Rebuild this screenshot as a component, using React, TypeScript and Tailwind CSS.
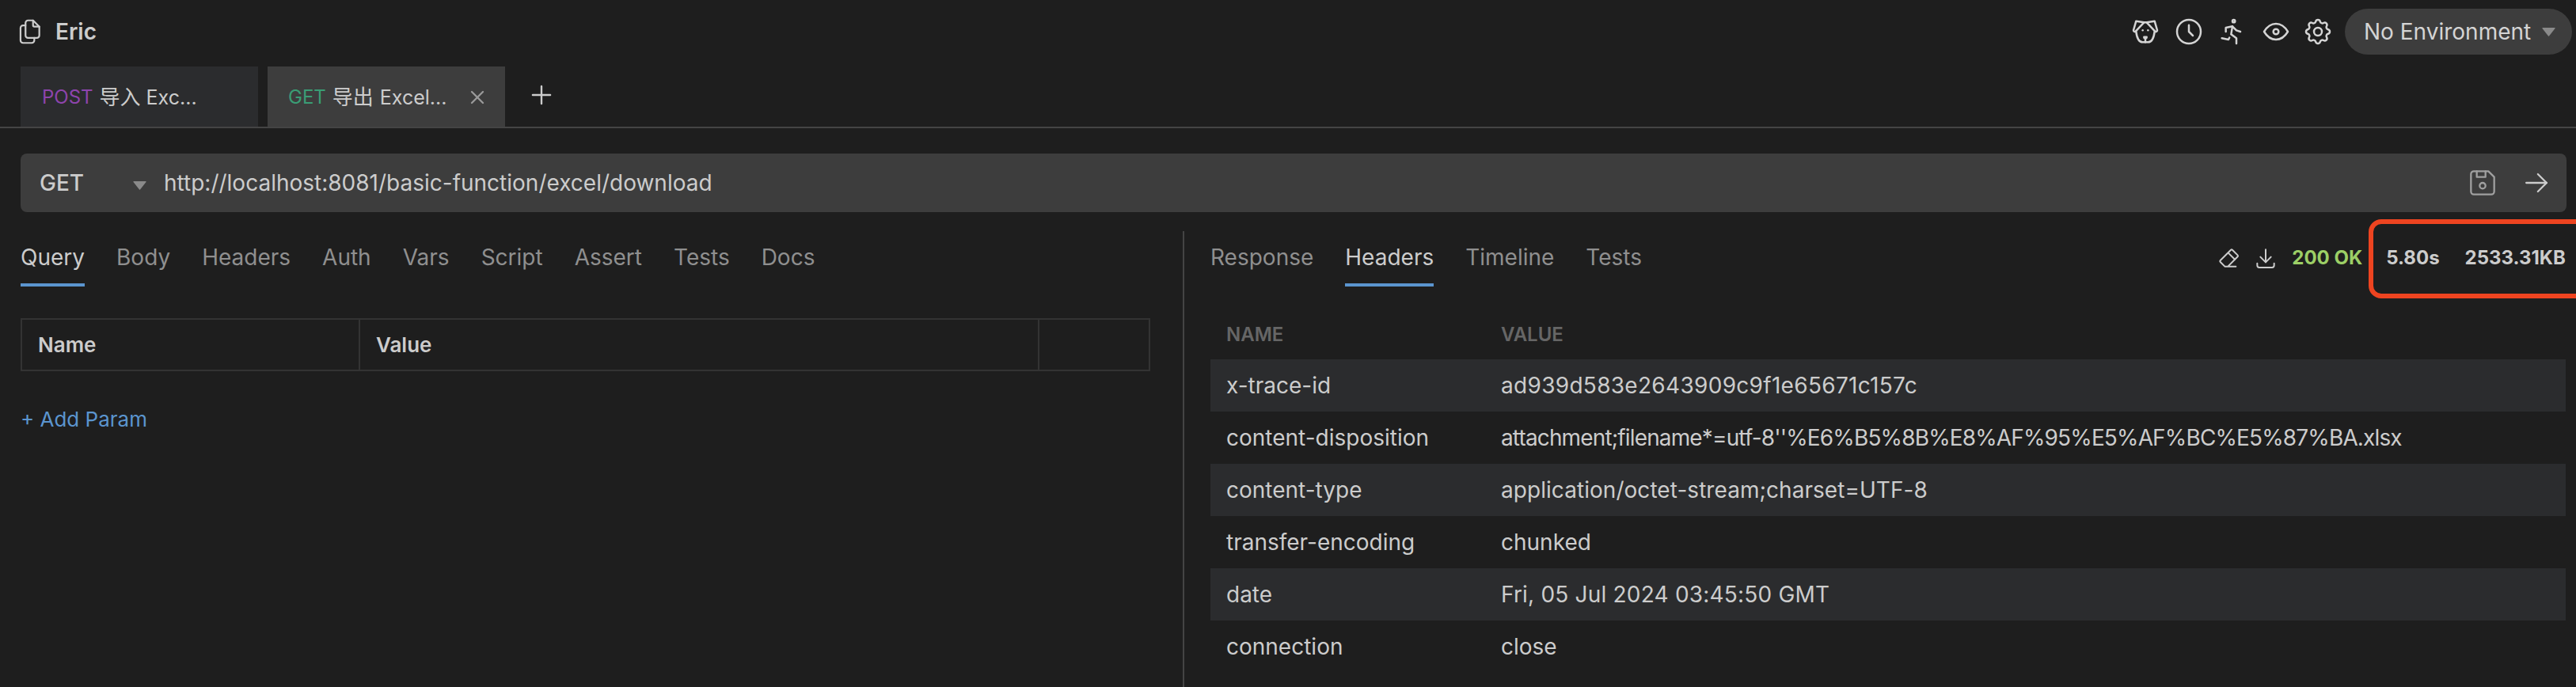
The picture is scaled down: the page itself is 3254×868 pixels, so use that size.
import React from "react";
import { TbFiles, TbDog, TbClock, TbRun, TbEye, TbSettings, TbDeviceFloppy, TbArrowRight, TbPlus, TbX, TbEraser, TbDownload } from "react-icons/tb";

const Caret = ({ className }: { className: string }) => (
  <svg viewBox="0 0 17 11" className={className}><path d="M1 0h15q1 0 .5 1L9 10.500q-.5.500-1 0L.5 1Q0 0 1 0z" fill="currentColor" /></svg>
);

const reqTabs = ["Query", "Body", "Headers", "Auth", "Vars", "Script", "Assert", "Tests", "Docs"];
const resTabs = ["Response", "Headers", "Timeline", "Tests"];
const rows = [
  ["x-trace-id", "ad939d583e2643909c9f1e65671c157c", "tracking-[0.3px]"],
  ["content-disposition", "attachment;filename*=utf-8''%E6%B5%8B%E8%AF%95%E5%AF%BC%E5%87%BA.xlsx", "tracking-[-0.86px]"],
  ["content-type", "application/octet-stream;charset=UTF-8", "tracking-[0.05px]"],
  ["transfer-encoding", "chunked", ""],
  ["date", "Fri, 05 Jul 2024 03:45:50 GMT", "tracking-[0.2px]"],
  ["connection", "close", ""],
];

const TabRow = ({ items, active }: { items: string[]; active: string }) => (
  <div className="flex gap-[40px] h-[70px]">
    {items.map((t) => (
      <div key={t} className={t === active ? "h-[70px] pt-[12px] text-[#cccccc] border-b-[4px] border-[#5b95cf]" : "h-[70px] pt-[12px] text-[#8f8f8f]"}>{t}</div>
    ))}
  </div>
);

export default function App() {
  return (
    <div className="w-[3254px] h-[868px] overflow-hidden bg-[#1e1e1e] text-[#cccccc] text-[28px] leading-[42px] font-['Inter','Noto_Sans_CJK_SC',sans-serif]">
      <div className="flex items-center h-[79px] pl-[18px] pr-[5px]">
        <TbFiles size={38} strokeWidth={1.4} />
        <span className="ml-[14px] font-semibold text-[28px]">Eric</span>
        <div className="ml-auto flex items-center text-[#d4d4d4]">
          <TbDog size={40} strokeWidth={1.5} />
          <span className="ml-[15px]"><TbClock size={40} strokeWidth={1.5} /></span>
          <span className="ml-[15px]"><TbRun size={40} strokeWidth={1.5} /></span>
          <span className="ml-[15px]"><TbEye size={40} strokeWidth={1.5} /></span>
          <span className="ml-[13px]"><TbSettings size={40} strokeWidth={1.5} /></span>
          <div className="ml-[14px] flex items-center h-[58px] w-[287px] rounded-[29px] bg-[#3d3d3d] pl-[24px]">
            <span>No Environment</span>
            <Caret className="ml-[14px] w-[17px] h-[11px] mt-[2px] text-[#8a8a8a]" />
          </div>
        </div>
      </div>
      <div className="flex h-[83px] pt-[5px] pl-[26px] border-b-[2px] border-[#444444] text-[24px]">
        <div className="flex items-center w-[300px] h-[76px] bg-[#2b2c2e] pl-[27px] pt-[2px]">
          <span className="text-[#8e44ad]">POST</span>
          <span className="ml-[8px] text-[26px]">导入</span>
          <span className="ml-[7px] text-[25px]">Exc...</span>
        </div>
        <div className="flex items-center w-[300px] h-[76px] ml-[12px] bg-[#3d3d3d] pl-[26px] pt-[2px]">
          <span className="text-[#3a9d75]">GET</span>
          <span className="ml-[8px] text-[26px]">导出</span>
          <span className="ml-[8px] text-[25px]">Excel...</span>
          <span className="ml-auto mr-[21px] text-[#9a9a9a]"><TbX size={28} strokeWidth={2} /></span>
        </div>
        <div className="flex items-center h-[72px] ml-[27px]"><TbPlus size={38} strokeWidth={1.5} /></div>
      </div>
      <div className="flex items-center ml-[26px] mr-[12px] mt-[32px] h-[74px] rounded-[8px] bg-[#3d3d3d] pl-[24px] pr-[16px]">
        <span className="w-[118px] font-medium">GET</span>
        <Caret className="w-[17px] h-[11px] mt-[6px] text-[#8a8a8a]" />
        <span className="ml-[22px]">http://localhost:8081/basic-function/excel/download</span>
        <span className="ml-auto text-[#a0a0a0]"><TbDeviceFloppy size={44} strokeWidth={1.25} /></span>
        <span className="ml-[24px]"><TbArrowRight size={44} strokeWidth={1.25} /></span>
      </div>
      <div className="flex h-[600px] mt-[8px] relative">
        <div className="w-[1494px] pl-[26px] pt-[16px] shrink-0">
          <TabRow items={reqTabs} active="Query" />
          <div className="w-[1427px] h-[67px] mt-[40px] flex border-[2px] border-[#333333] font-semibold text-[26px]">
            <div className="w-[427px] pl-[20px] flex items-center border-r-[2px] border-[#333333]">Name</div>
            <div className="w-[858px] pl-[20px] flex items-center border-r-[2px] border-[#333333]">Value</div>
          </div>
          <div className="mt-[40px] text-[#5b95cf] text-[26px]">+ Add Param</div>
        </div>
        <div className="w-[2px] h-[576px] mt-[16px] bg-[#444444] shrink-0" />
        <div className="flex-1 pl-[33px] pr-[13px] pt-[16px]">
          <div className="flex items-start">
            <TabRow items={resTabs} active="Headers" />
            <div className="ml-auto flex items-center h-[70px] font-bold text-[24px] pb-[2px]">
              <TbEraser size={32} strokeWidth={1.5} />
              <span className="ml-[15px]"><TbDownload size={32} strokeWidth={1.5} /></span>
              <span className="ml-[17px] text-[#9ccf66]">200 OK</span>
              <span className="ml-[30px]">5.80s</span>
              <span className="ml-[32px]">2533.31KB</span>
            </div>
          </div>
          <div className="flex h-[32px] mt-[45px] mb-[15px] items-center text-[24px] font-semibold text-[#666666] pl-[20px]">
            <span className="w-[347px]">NAME</span><span>VALUE</span>
          </div>
          {rows.map(([k, v, t], i) => (
            <div key={k} className={i % 2 === 0 ? "flex items-center h-[66px] pl-[20px] bg-[#2b2c2e]" : "flex items-center h-[66px] pl-[20px]"}>
              <span className="w-[347px]">{k}</span><span className={t}>{v}</span>
            </div>
          ))}
        </div>
        <div className="absolute left-[2992px] top-[1px] w-[280px] h-[100px] rounded-[16px] border-[6px] border-[#ee4420]" />
      </div>
    </div>
  );
}
